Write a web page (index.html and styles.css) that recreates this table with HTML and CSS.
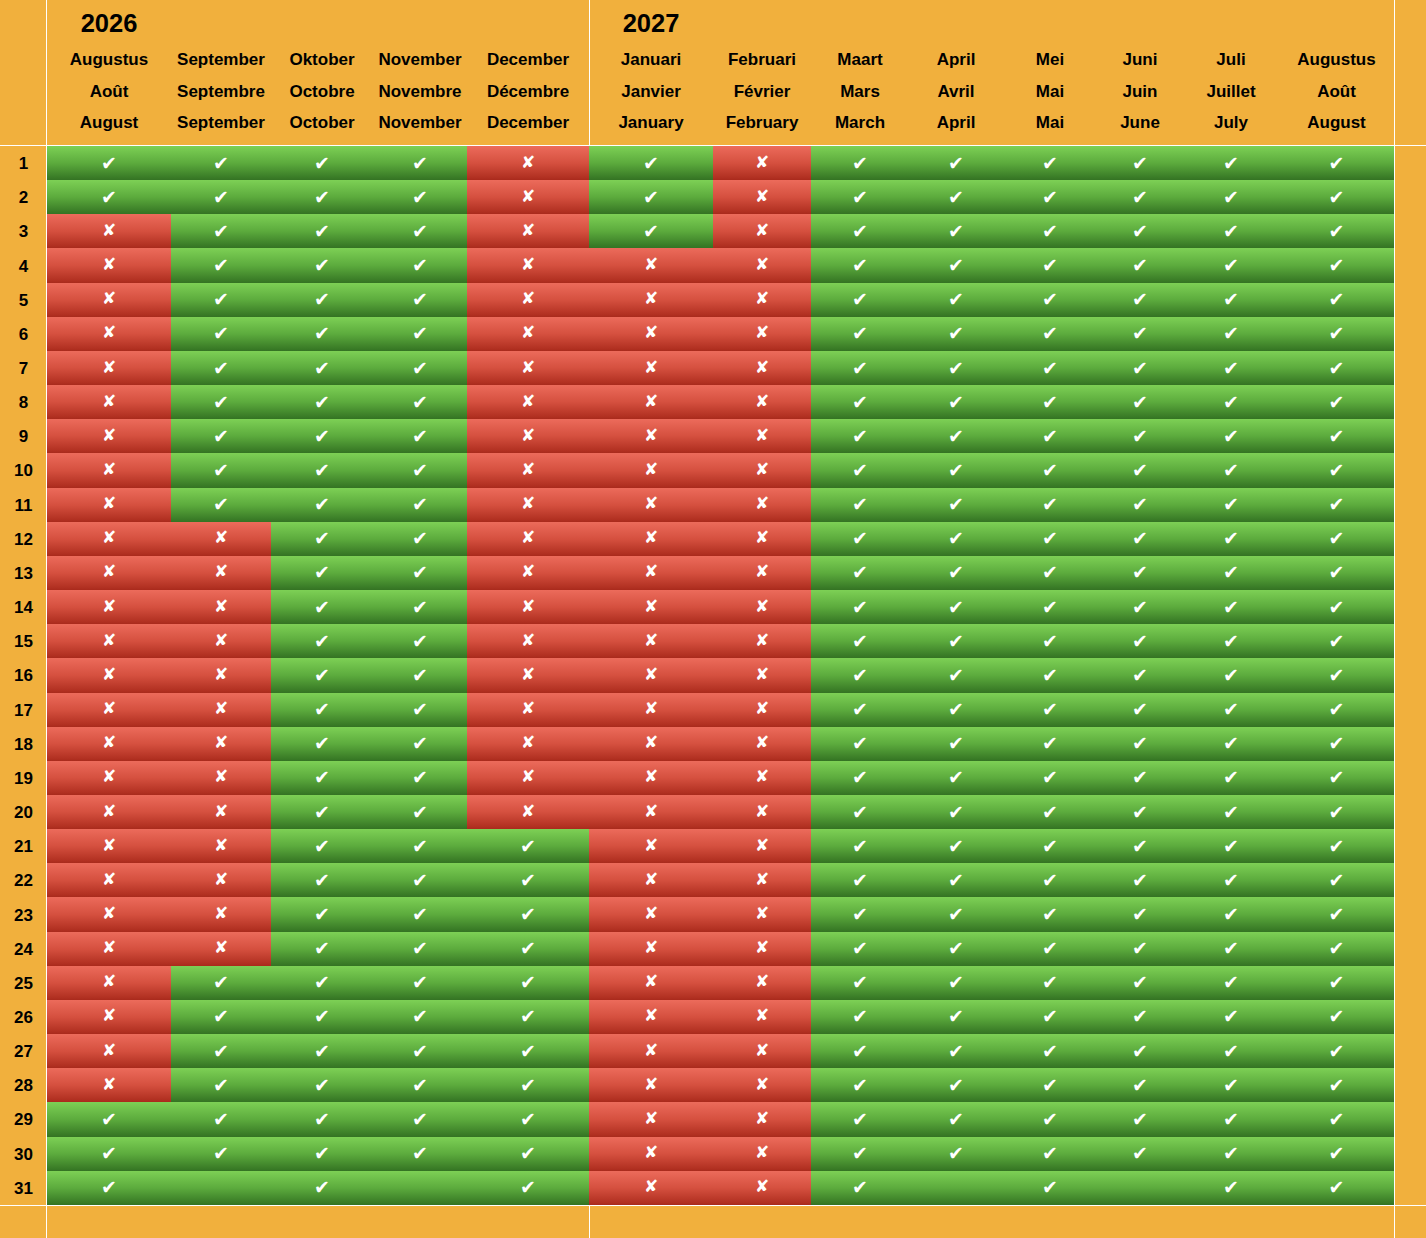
FILE: index.html
```html
<!DOCTYPE html>
<html lang="nl">
<head>
<meta charset="utf-8">
<title>Beschikbaarheid 2026 – 2027</title>
<link rel="stylesheet" href="styles.css">
</head>
<body>
<table class="cal">
  <colgroup>
    <col class="c-day">
    <col class="c-aug1">
    <col class="c-sep">
    <col class="c-oct">
    <col class="c-nov">
    <col class="c-dec">
    <col class="c-jan">
    <col class="c-feb">
    <col class="c-mar">
    <col class="c-apr">
    <col class="c-may">
    <col class="c-jun">
    <col class="c-jul">
    <col class="c-aug2">
    <col class="c-pad">
  </colgroup>
  <thead>
    <tr class="years">
      <th class="day"></th>
      <th class="yr">2026</th><th></th><th></th><th></th><th></th>
      <th class="yr split">2027</th><th></th><th></th><th></th><th></th><th></th><th></th><th></th>
      <th class="pad"></th>
    </tr>
    <tr class="months">
      <th class="day"></th>
      <th>Augustus<br>Août<br>August</th>
      <th>September<br>Septembre<br>September</th>
      <th>Oktober<br>Octobre<br>October</th>
      <th>November<br>Novembre<br>November</th>
      <th>December<br>Décembre<br>December</th>
      <th class="split">Januari<br>Janvier<br>January</th>
      <th>Februari<br>Février<br>February</th>
      <th>Maart<br>Mars<br>March</th>
      <th>April<br>Avril<br>April</th>
      <th>Mei<br>Mai<br>Mai</th>
      <th>Juni<br>Juin<br>June</th>
      <th>Juli<br>Juillet<br>July</th>
      <th>Augustus<br>Août<br>August</th>
      <th class="pad"></th>
    </tr>
  </thead>
  <tbody>
    <tr><th class="day">1</th><td class="y">✔</td><td class="y">✔</td><td class="y">✔</td><td class="y">✔</td><td class="n">✘</td><td class="y">✔</td><td class="n">✘</td><td class="y">✔</td><td class="y">✔</td><td class="y">✔</td><td class="y">✔</td><td class="y">✔</td><td class="y">✔</td><td class="pad"></td></tr>
    <tr><th class="day">2</th><td class="y">✔</td><td class="y">✔</td><td class="y">✔</td><td class="y">✔</td><td class="n">✘</td><td class="y">✔</td><td class="n">✘</td><td class="y">✔</td><td class="y">✔</td><td class="y">✔</td><td class="y">✔</td><td class="y">✔</td><td class="y">✔</td><td class="pad"></td></tr>
    <tr><th class="day">3</th><td class="n">✘</td><td class="y">✔</td><td class="y">✔</td><td class="y">✔</td><td class="n">✘</td><td class="y">✔</td><td class="n">✘</td><td class="y">✔</td><td class="y">✔</td><td class="y">✔</td><td class="y">✔</td><td class="y">✔</td><td class="y">✔</td><td class="pad"></td></tr>
    <tr><th class="day">4</th><td class="n">✘</td><td class="y">✔</td><td class="y">✔</td><td class="y">✔</td><td class="n">✘</td><td class="n">✘</td><td class="n">✘</td><td class="y">✔</td><td class="y">✔</td><td class="y">✔</td><td class="y">✔</td><td class="y">✔</td><td class="y">✔</td><td class="pad"></td></tr>
    <tr><th class="day">5</th><td class="n">✘</td><td class="y">✔</td><td class="y">✔</td><td class="y">✔</td><td class="n">✘</td><td class="n">✘</td><td class="n">✘</td><td class="y">✔</td><td class="y">✔</td><td class="y">✔</td><td class="y">✔</td><td class="y">✔</td><td class="y">✔</td><td class="pad"></td></tr>
    <tr><th class="day">6</th><td class="n">✘</td><td class="y">✔</td><td class="y">✔</td><td class="y">✔</td><td class="n">✘</td><td class="n">✘</td><td class="n">✘</td><td class="y">✔</td><td class="y">✔</td><td class="y">✔</td><td class="y">✔</td><td class="y">✔</td><td class="y">✔</td><td class="pad"></td></tr>
    <tr><th class="day">7</th><td class="n">✘</td><td class="y">✔</td><td class="y">✔</td><td class="y">✔</td><td class="n">✘</td><td class="n">✘</td><td class="n">✘</td><td class="y">✔</td><td class="y">✔</td><td class="y">✔</td><td class="y">✔</td><td class="y">✔</td><td class="y">✔</td><td class="pad"></td></tr>
    <tr><th class="day">8</th><td class="n">✘</td><td class="y">✔</td><td class="y">✔</td><td class="y">✔</td><td class="n">✘</td><td class="n">✘</td><td class="n">✘</td><td class="y">✔</td><td class="y">✔</td><td class="y">✔</td><td class="y">✔</td><td class="y">✔</td><td class="y">✔</td><td class="pad"></td></tr>
    <tr><th class="day">9</th><td class="n">✘</td><td class="y">✔</td><td class="y">✔</td><td class="y">✔</td><td class="n">✘</td><td class="n">✘</td><td class="n">✘</td><td class="y">✔</td><td class="y">✔</td><td class="y">✔</td><td class="y">✔</td><td class="y">✔</td><td class="y">✔</td><td class="pad"></td></tr>
    <tr><th class="day">10</th><td class="n">✘</td><td class="y">✔</td><td class="y">✔</td><td class="y">✔</td><td class="n">✘</td><td class="n">✘</td><td class="n">✘</td><td class="y">✔</td><td class="y">✔</td><td class="y">✔</td><td class="y">✔</td><td class="y">✔</td><td class="y">✔</td><td class="pad"></td></tr>
    <tr><th class="day">11</th><td class="n">✘</td><td class="y">✔</td><td class="y">✔</td><td class="y">✔</td><td class="n">✘</td><td class="n">✘</td><td class="n">✘</td><td class="y">✔</td><td class="y">✔</td><td class="y">✔</td><td class="y">✔</td><td class="y">✔</td><td class="y">✔</td><td class="pad"></td></tr>
    <tr><th class="day">12</th><td class="n">✘</td><td class="n">✘</td><td class="y">✔</td><td class="y">✔</td><td class="n">✘</td><td class="n">✘</td><td class="n">✘</td><td class="y">✔</td><td class="y">✔</td><td class="y">✔</td><td class="y">✔</td><td class="y">✔</td><td class="y">✔</td><td class="pad"></td></tr>
    <tr><th class="day">13</th><td class="n">✘</td><td class="n">✘</td><td class="y">✔</td><td class="y">✔</td><td class="n">✘</td><td class="n">✘</td><td class="n">✘</td><td class="y">✔</td><td class="y">✔</td><td class="y">✔</td><td class="y">✔</td><td class="y">✔</td><td class="y">✔</td><td class="pad"></td></tr>
    <tr><th class="day">14</th><td class="n">✘</td><td class="n">✘</td><td class="y">✔</td><td class="y">✔</td><td class="n">✘</td><td class="n">✘</td><td class="n">✘</td><td class="y">✔</td><td class="y">✔</td><td class="y">✔</td><td class="y">✔</td><td class="y">✔</td><td class="y">✔</td><td class="pad"></td></tr>
    <tr><th class="day">15</th><td class="n">✘</td><td class="n">✘</td><td class="y">✔</td><td class="y">✔</td><td class="n">✘</td><td class="n">✘</td><td class="n">✘</td><td class="y">✔</td><td class="y">✔</td><td class="y">✔</td><td class="y">✔</td><td class="y">✔</td><td class="y">✔</td><td class="pad"></td></tr>
    <tr><th class="day">16</th><td class="n">✘</td><td class="n">✘</td><td class="y">✔</td><td class="y">✔</td><td class="n">✘</td><td class="n">✘</td><td class="n">✘</td><td class="y">✔</td><td class="y">✔</td><td class="y">✔</td><td class="y">✔</td><td class="y">✔</td><td class="y">✔</td><td class="pad"></td></tr>
    <tr><th class="day">17</th><td class="n">✘</td><td class="n">✘</td><td class="y">✔</td><td class="y">✔</td><td class="n">✘</td><td class="n">✘</td><td class="n">✘</td><td class="y">✔</td><td class="y">✔</td><td class="y">✔</td><td class="y">✔</td><td class="y">✔</td><td class="y">✔</td><td class="pad"></td></tr>
    <tr><th class="day">18</th><td class="n">✘</td><td class="n">✘</td><td class="y">✔</td><td class="y">✔</td><td class="n">✘</td><td class="n">✘</td><td class="n">✘</td><td class="y">✔</td><td class="y">✔</td><td class="y">✔</td><td class="y">✔</td><td class="y">✔</td><td class="y">✔</td><td class="pad"></td></tr>
    <tr><th class="day">19</th><td class="n">✘</td><td class="n">✘</td><td class="y">✔</td><td class="y">✔</td><td class="n">✘</td><td class="n">✘</td><td class="n">✘</td><td class="y">✔</td><td class="y">✔</td><td class="y">✔</td><td class="y">✔</td><td class="y">✔</td><td class="y">✔</td><td class="pad"></td></tr>
    <tr><th class="day">20</th><td class="n">✘</td><td class="n">✘</td><td class="y">✔</td><td class="y">✔</td><td class="n">✘</td><td class="n">✘</td><td class="n">✘</td><td class="y">✔</td><td class="y">✔</td><td class="y">✔</td><td class="y">✔</td><td class="y">✔</td><td class="y">✔</td><td class="pad"></td></tr>
    <tr><th class="day">21</th><td class="n">✘</td><td class="n">✘</td><td class="y">✔</td><td class="y">✔</td><td class="y">✔</td><td class="n">✘</td><td class="n">✘</td><td class="y">✔</td><td class="y">✔</td><td class="y">✔</td><td class="y">✔</td><td class="y">✔</td><td class="y">✔</td><td class="pad"></td></tr>
    <tr><th class="day">22</th><td class="n">✘</td><td class="n">✘</td><td class="y">✔</td><td class="y">✔</td><td class="y">✔</td><td class="n">✘</td><td class="n">✘</td><td class="y">✔</td><td class="y">✔</td><td class="y">✔</td><td class="y">✔</td><td class="y">✔</td><td class="y">✔</td><td class="pad"></td></tr>
    <tr><th class="day">23</th><td class="n">✘</td><td class="n">✘</td><td class="y">✔</td><td class="y">✔</td><td class="y">✔</td><td class="n">✘</td><td class="n">✘</td><td class="y">✔</td><td class="y">✔</td><td class="y">✔</td><td class="y">✔</td><td class="y">✔</td><td class="y">✔</td><td class="pad"></td></tr>
    <tr><th class="day">24</th><td class="n">✘</td><td class="n">✘</td><td class="y">✔</td><td class="y">✔</td><td class="y">✔</td><td class="n">✘</td><td class="n">✘</td><td class="y">✔</td><td class="y">✔</td><td class="y">✔</td><td class="y">✔</td><td class="y">✔</td><td class="y">✔</td><td class="pad"></td></tr>
    <tr><th class="day">25</th><td class="n">✘</td><td class="y">✔</td><td class="y">✔</td><td class="y">✔</td><td class="y">✔</td><td class="n">✘</td><td class="n">✘</td><td class="y">✔</td><td class="y">✔</td><td class="y">✔</td><td class="y">✔</td><td class="y">✔</td><td class="y">✔</td><td class="pad"></td></tr>
    <tr><th class="day">26</th><td class="n">✘</td><td class="y">✔</td><td class="y">✔</td><td class="y">✔</td><td class="y">✔</td><td class="n">✘</td><td class="n">✘</td><td class="y">✔</td><td class="y">✔</td><td class="y">✔</td><td class="y">✔</td><td class="y">✔</td><td class="y">✔</td><td class="pad"></td></tr>
    <tr><th class="day">27</th><td class="n">✘</td><td class="y">✔</td><td class="y">✔</td><td class="y">✔</td><td class="y">✔</td><td class="n">✘</td><td class="n">✘</td><td class="y">✔</td><td class="y">✔</td><td class="y">✔</td><td class="y">✔</td><td class="y">✔</td><td class="y">✔</td><td class="pad"></td></tr>
    <tr><th class="day">28</th><td class="n">✘</td><td class="y">✔</td><td class="y">✔</td><td class="y">✔</td><td class="y">✔</td><td class="n">✘</td><td class="n">✘</td><td class="y">✔</td><td class="y">✔</td><td class="y">✔</td><td class="y">✔</td><td class="y">✔</td><td class="y">✔</td><td class="pad"></td></tr>
    <tr><th class="day">29</th><td class="y">✔</td><td class="y">✔</td><td class="y">✔</td><td class="y">✔</td><td class="y">✔</td><td class="n">✘</td><td class="n">✘</td><td class="y">✔</td><td class="y">✔</td><td class="y">✔</td><td class="y">✔</td><td class="y">✔</td><td class="y">✔</td><td class="pad"></td></tr>
    <tr><th class="day">30</th><td class="y">✔</td><td class="y">✔</td><td class="y">✔</td><td class="y">✔</td><td class="y">✔</td><td class="n">✘</td><td class="n">✘</td><td class="y">✔</td><td class="y">✔</td><td class="y">✔</td><td class="y">✔</td><td class="y">✔</td><td class="y">✔</td><td class="pad"></td></tr>
    <tr><th class="day">31</th><td class="y">✔</td><td class="y"></td><td class="y">✔</td><td class="y"></td><td class="y">✔</td><td class="n">✘</td><td class="n">✘</td><td class="y">✔</td><td class="y"></td><td class="y">✔</td><td class="y"></td><td class="y">✔</td><td class="y">✔</td><td class="pad"></td></tr>
  </tbody>
  <tfoot>
    <tr>
      <td class="day"></td>
      <td colspan="5"></td>
      <td colspan="8" class="split"></td>
      <td class="pad"></td>
    </tr>
  </tfoot>
</table>
</body>
</html>
```

FILE: styles.css
```css
html, body {
  margin: 0;
  padding: 0;
  background: #f1b03d;
}

.cal {
  width: 1426px;
  table-layout: fixed;
  border-collapse: separate;
  border-spacing: 0;
  font-family: "Liberation Sans", Arial, sans-serif;
  font-weight: bold;
  font-size: 17px;
  color: #000;
}

.cal th,
.cal td {
  padding: 0;
  box-sizing: border-box;
  text-align: center;
}

/* column widths */
.c-day  { width: 47px; }
.c-aug1 { width: 124px; }
.c-sep  { width: 100px; }
.c-oct  { width: 102px; }
.c-nov  { width: 94px; }
.c-dec  { width: 122px; }
.c-jan  { width: 124px; }
.c-feb  { width: 98px; }
.c-mar  { width: 98px; }
.c-apr  { width: 94px; }
.c-may  { width: 94px; }
.c-jun  { width: 86px; }
.c-jul  { width: 96px; }
.c-aug2 { width: 115px; }
.c-pad  { width: 32px; }

/* header */
.years th {
  height: 43px;
  padding-top: 3px;
  line-height: 40px;
  vertical-align: top;
}

.years .yr {
  font-size: 25.5px;
}

.months th {
  height: 103px;
  padding-top: 1px;
  line-height: 31.5px;
  vertical-align: top;
  box-shadow: inset 0 -1px #fff;
}

/* white rules */
.day {
  box-shadow: inset -1px 0 #fff;
}

.pad {
  box-shadow: inset 1px 0 #fff;
}

.split {
  box-shadow: inset 1px 0 #fff;
}

.months .day {
  box-shadow: inset -1px 0 #fff, inset 0 -1px #fff;
}

.months .pad,
.months .split {
  box-shadow: inset 1px 0 #fff, inset 0 -1px #fff;
}

/* body */
tbody tr {
  height: 34.16px;
}

tbody th.day {
  font-size: 17px;
  vertical-align: middle;
  padding-top: 2px;
}

tbody td {
  vertical-align: middle;
  color: #fff;
  font-family: "DejaVu Sans", sans-serif;
  font-size: 19px;
  font-weight: normal;
  line-height: 1;
}

td.n {
  font-size: 17px;
  padding-bottom: 2px;
}

td.y {
  background: linear-gradient(to bottom, #7dd055 0%, #5cab3d 50%, #3a7c27 92%, #347323 100%);
}

td.n {
  background: linear-gradient(to bottom, #ec6b5b 0%, #d5503f 50%, #b23122 92%, #a92a1c 100%);
}

/* footer */
tfoot td {
  height: 33px;
  box-shadow: inset 0 1px #fff;
}

tfoot .day {
  box-shadow: inset -1px 0 #fff, inset 0 1px #fff;
}

tfoot .pad,
tfoot .split {
  box-shadow: inset 1px 0 #fff, inset 0 1px #fff;
}
```
